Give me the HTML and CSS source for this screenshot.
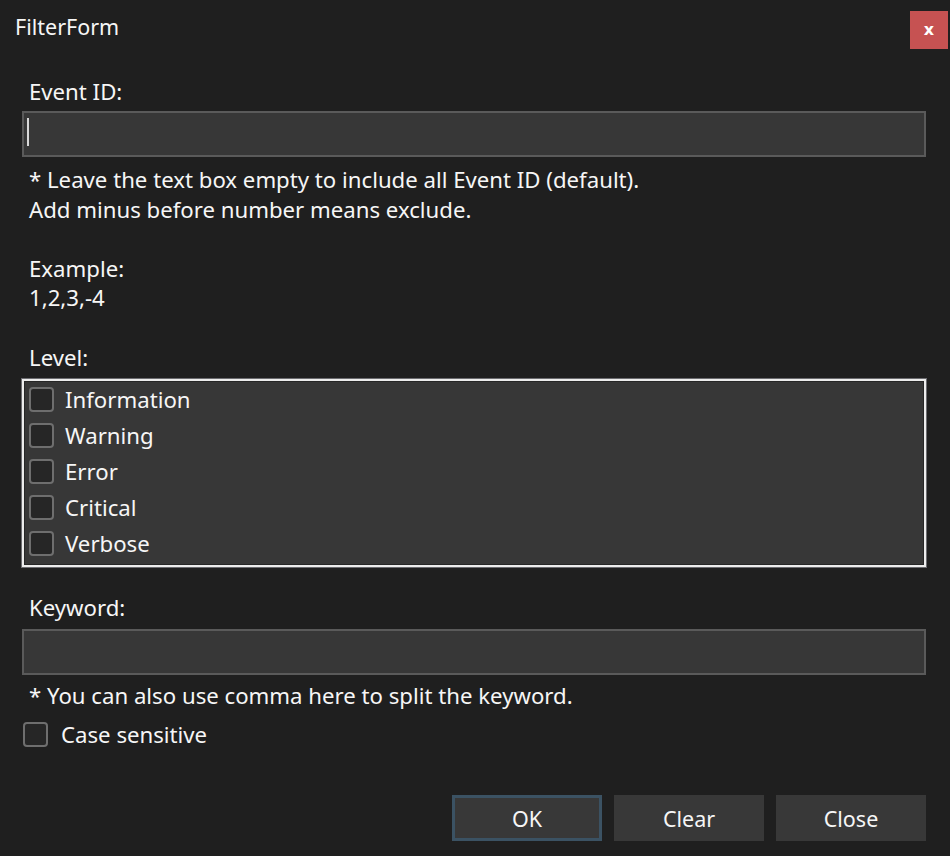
FILE: index.html
```html
<!DOCTYPE html>
<html>
<head>
<meta charset="utf-8">
<link rel="stylesheet" href="styles.css">
</head>
<body>
<div class="window">
  <div class="titlebar">
    <div class="title">FilterForm</div>
    <div class="close-btn">x</div>
  </div>
  <div class="content">
    <div class="label">Event ID:</div>
    <div class="textbox"><span class="caret"></span></div>
    <div class="help">* Leave the text box empty to include all Event ID (default).<br>Add minus before number means exclude.<br><br>Example:<br>1,2,3,-4<br><br>Level:</div>
    <div class="listbox">
      <div class="item"><span class="check"></span><span>Information</span></div>
      <div class="item"><span class="check"></span><span>Warning</span></div>
      <div class="item"><span class="check"></span><span>Error</span></div>
      <div class="item"><span class="check"></span><span>Critical</span></div>
      <div class="item"><span class="check"></span><span>Verbose</span></div>
    </div>
    <div class="label keyword">Keyword:</div>
    <div class="textbox"></div>
    <div class="label note">* You can also use comma here to split the keyword.</div>
    <div class="case"><span class="check"></span><span>Case sensitive</span></div>
    <div class="buttons">
      <div class="btn default">OK</div>
      <div class="btn">Clear</div>
      <div class="btn">Close</div>
    </div>
  </div>
</div>
</body>
</html>
```

FILE: styles.css
```css
html, body {
  margin: 0;
  padding: 0;
  background: #1f1f1f;
}
.window {
  width: 950px;
  height: 856px;
  background: #1f1f1f;
  color: #f6f6f6;
  font-family: "Noto Sans", "Open Sans", sans-serif;
  font-size: 22.2px;
  box-sizing: border-box;
}
.titlebar {
  display: flex;
  justify-content: space-between;
  align-items: flex-start;
  padding: 11px 2px 0 15px;
  height: 77px;
  box-sizing: border-box;
}
.title {
  line-height: 32px;
  font-size: 21.5px;
}
.close-btn {
  width: 38px;
  height: 38px;
  background: #c65252;
  color: #ffffff;
  font-weight: bold;
  font-size: 16px;
  line-height: 37px;
  text-align: center;
  font-family: "DejaVu Sans", sans-serif;
}
.content {
  padding: 0 24px 0 22px;
}
.label {
  line-height: 30px;
  padding-left: 7px;
}
.textbox {
  margin-top: 4px;
  height: 46px;
  box-sizing: border-box;
  border: 2px solid #5a5a5a;
  background: #373737;
  padding: 5px 3px;
}
.caret {
  display: block;
  width: 2px;
  height: 28px;
  background: #d8d8d8;
}
.help {
  margin-top: 8px;
  padding-left: 7px;
  line-height: 29.6px;
}
.listbox {
  margin-top: 7px;
  height: 188px;
  box-sizing: border-box;
  border: 2px solid #ececec;
  outline: 1px solid #6c6c70;
  box-shadow: inset 0 0 0 1px #262626;
  background: #373737;
  padding: 0 0 0 5px;
}
.item {
  display: flex;
  align-items: center;
  height: 36px;
  gap: 11px;
}
.check {
  display: inline-block;
  width: 25px;
  height: 25px;
  box-sizing: border-box;
  border: 2px solid #6e6e6e;
  border-radius: 4px;
  background: #262626;
  flex: none;
}
.keyword {
  margin-top: 26px;
}
.keyword + .textbox {
  margin-top: 6px;
}
.note {
  margin-top: 6px;
}
.case {
  display: flex;
  align-items: center;
  gap: 13px;
  height: 30px;
  margin-top: 8px;
  padding-left: 1px;
}
.buttons {
  display: flex;
  justify-content: flex-end;
  gap: 12px;
  margin-top: 46px;
}
.btn {
  width: 150px;
  height: 46px;
  box-sizing: border-box;
  background: #383838;
  border: 2px solid #383838;
  text-align: center;
  line-height: 44px;
  font-size: 21.5px;
}
.btn.default {
  border: 3px solid #3b5263;
  line-height: 42px;
}
```
